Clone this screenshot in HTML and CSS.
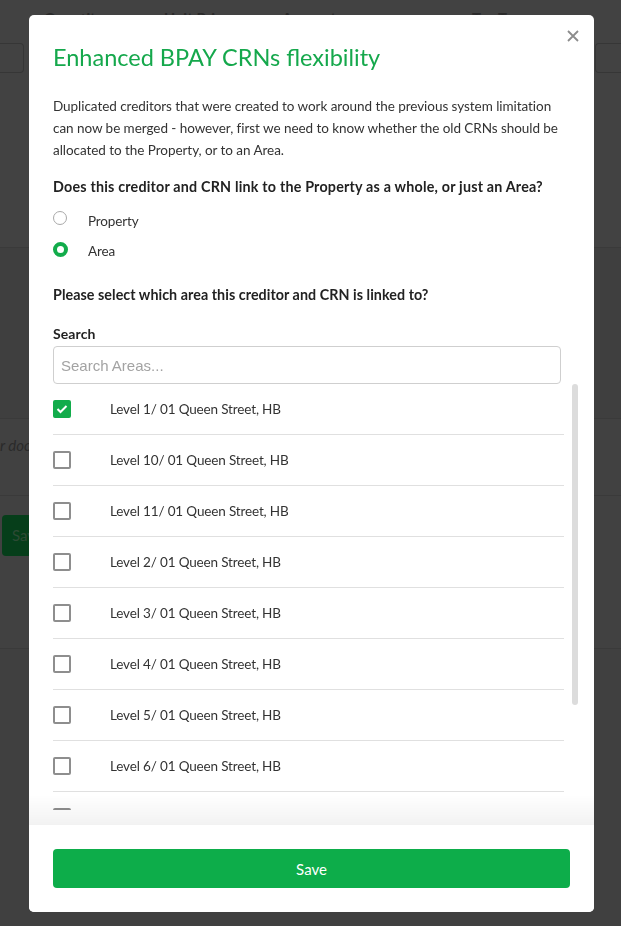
FILE: index.html
```html
<!DOCTYPE html>
<html lang="en">
<head>
<meta charset="utf-8">
<title>Enhanced BPAY CRNs flexibility</title>
<link rel="stylesheet" href="styles.css">
</head>
<body>
<div class="page">
  <div class="page-head">
    <span class="ph-q">Quantity</span>
    <span class="ph-u">Unit Price</span>
    <span class="ph-a">Amount</span>
    <span class="ph-t">Tax Type</span>
  </div>
  <div class="page-row">
    <div class="page-ta"></div>
    <div class="page-box"></div>
  </div>
  <div class="page-band b2"></div>
  <div class="page-band b3">
    <div class="note-row"><span class="note-pre"><span>Drag and drop you</span></span><span>r documents</span></div>
  </div>
  <div class="page-band b4"><span class="page-save">Save</span></div>
  <div class="page-band b5"></div>
</div>

<div class="modal" role="dialog">
  <button class="close" aria-label="Close">
    <svg width="12" height="12" viewBox="0 0 12 12"><path d="M1 1 L11 11 M11 1 L1 11" stroke="#8c8c8c" stroke-width="1.8" fill="none"/></svg>
  </button>
  <div class="modal-head">
    <h2 class="title">Enhanced BPAY CRNs flexibility</h2>
  </div>
  <div class="modal-content">
    <p class="intro">Duplicated creditors that were created to work around the previous system limitation can now be merged - however, first we need to know whether the old CRNs should be allocated to the Property, or to an Area.</p>
    <p class="question">Does this creditor and CRN link to the Property as a whole, or just an Area?</p>
    <div class="radios">
      <label class="radio-row"><span class="radio"></span><span class="radio-label">Property</span></label>
      <label class="radio-row"><span class="radio checked"></span><span class="radio-label">Area</span></label>
    </div>
    <p class="question q2">Please select which area this creditor and CRN is linked to?</p>
    <div class="search-label">Search</div>
    <input class="search" type="text" placeholder="Search Areas...">
  </div>
  <div class="list-wrap">
    <ul class="list">
      <li class="item"><span class="cb checked"><svg width="12" height="10" viewBox="0 0 12 10"><path d="M1.5 5 L4.5 8 L10.5 2" stroke="#fff" stroke-width="2" fill="none"/></svg></span><span class="item-label">Level 1/ 01 Queen Street, HB</span></li>
      <li class="item"><span class="cb"></span><span class="item-label">Level 10/ 01 Queen Street, HB</span></li>
      <li class="item"><span class="cb"></span><span class="item-label">Level 11/ 01 Queen Street, HB</span></li>
      <li class="item"><span class="cb"></span><span class="item-label">Level 2/ 01 Queen Street, HB</span></li>
      <li class="item"><span class="cb"></span><span class="item-label">Level 3/ 01 Queen Street, HB</span></li>
      <li class="item"><span class="cb"></span><span class="item-label">Level 4/ 01 Queen Street, HB</span></li>
      <li class="item"><span class="cb"></span><span class="item-label">Level 5/ 01 Queen Street, HB</span></li>
      <li class="item"><span class="cb"></span><span class="item-label">Level 6/ 01 Queen Street, HB</span></li>
      <li class="item"><span class="cb"></span><span class="item-label">Level 7/ 01 Queen Street, HB</span></li>
      <li class="item"><span class="cb"></span><span class="item-label">Level 8/ 01 Queen Street, HB</span></li>
      <li class="item"><span class="cb"></span><span class="item-label">Level 9/ 01 Queen Street, HB</span></li>
    </ul>
    <div class="scrollbar"><div class="thumb"></div></div>
  </div>
  <div class="modal-foot">
    <button class="save">Save</button>
  </div>
</div>
</body>
</html>
```

FILE: styles.css
```css
* { box-sizing: border-box; }
html, body { margin: 0; padding: 0; }
body {
  width: 621px;
  height: 926px;
  overflow: hidden;
  background: #3f3f3f;
  font-family: Lato, "Open Sans", sans-serif;
  color: #2b2b2b;
}

/* dimmed page behind the dialog */
.page { height: 926px; display: flex; flex-direction: column; }
.page-head {
  height: 43px;
  background: #424242;
  font-weight: 700;
  font-size: 15px;
  color: #2a2a2a;
  display: flex;
  padding: 9px 0 0 44px;
}
.ph-q { width: 120px; }
.ph-u { width: 118px; }
.ph-a { width: 190px; }
.ph-t { width: 100px; }
.page-row {
  height: 205px;
  background: #424242;
  display: flex;
  justify-content: space-between;
  border-bottom: 1px solid #3a3a3a;
}
.page-ta {
  width: 24px; height: 30px;
  border: 1px solid #363636; border-left: none;
  border-radius: 0 4px 4px 0;
}
.page-box {
  width: 26px; height: 30px;
  border: 1px solid #363636; border-right: none;
  border-radius: 4px 0 0 4px;
}
.page-band { background: #404040; }
.b2 { height: 171px; background: #3f3f3f; border-bottom: 1px solid #3a3a3a; }
.b3 { height: 77px; background: #414141; border-bottom: 1px solid #3a3a3a; padding-top: 17px; }
.note-row {
  display: flex;
  white-space: nowrap;
  font-style: italic;
  font-size: 15px;
  color: #2a2a2a;
}
.note-pre { width: 0; display: flex; justify-content: flex-end; }
.b4 { height: 153px; background: #414141; border-bottom: 1px solid #3a3a3a; padding-top: 19px; }
.page-save {
  display: inline-block;
  margin-left: 2px;
  width: 60px; height: 41px;
  border-radius: 4px;
  background: #063e1a;
  color: #2d4a34;
  font-size: 15px;
  line-height: 41px;
  padding-left: 10px;
}
.b5 { flex: 1; background: #404040; }

/* dialog */
.modal {
  position: fixed;
  left: 29px;
  top: 15px;
  width: 565px;
  height: 897px;
  background: #fff;
  border-radius: 5px;
  display: flex;
  flex-direction: column;
  overflow: hidden;
}
.close {
  position: absolute;
  left: 538px;
  top: 15px;
  width: 12px; height: 12px;
  padding: 0; border: 0; background: none;
  display: block;
}
.close svg { display: block; }
.modal-head { padding: 27px 24px 0; }
.title {
  margin: 0;
  font-size: 23.5px;
  line-height: 30px;
  font-weight: 400;
  color: #15a84c;
}
.modal-content { padding: 0 24px; font-size: 13.5px; letter-spacing: -0.15px; }
.intro {
  margin: 23px 0 0;
  line-height: 22px;
  letter-spacing: -0.05px;
  color: #333;
}
.question {
  margin: 15px 0 0;
  line-height: 22px;
  font-weight: 700;
  font-size: 14.3px;
  letter-spacing: 0.2px;
  color: #222;
}
.q2 { margin-top: 18px; letter-spacing: 0.05px; }
.radios { margin-top: 8px; display: flex; flex-direction: column; }
.radio-row { height: 30px; display: flex; align-items: flex-start; }
.radio {
  width: 14px; height: 14px;
  margin-top: 5px;
  border-radius: 50%;
  border: 1px solid #a9a9a9;
  background: #fff;
  flex: none;
}
.radio.checked {
  width: 15px; height: 15px;
  margin-top: 6px;
  border: 4px solid #12ac4b;
}
.radio-label {
  margin-left: 21px;
  line-height: 30px;
  color: #333;
}
.radio.checked + .radio-label { margin-left: 20px; }
.search-label {
  margin-top: 18px;
  line-height: 20px;
  font-weight: 700;
  font-size: 14px;
  letter-spacing: 0.1px;
  color: #222;
}
.search {
  display: block;
  margin-top: 2px;
  width: 508px;
  height: 38px;
  border: 1px solid #cfcfcf;
  border-radius: 4px;
  padding: 0 7px;
  font-family: "Liberation Sans", Arial, sans-serif;
  font-size: 15px;
  letter-spacing: 0;
  color: #333;
  outline: none;
}
.search::placeholder { color: #a3a3a3; }

.list-wrap {
  flex: 1;
  min-height: 0;
  margin: 0 14px 15px 24px;
  display: flex;
}
.list {
  flex: 1;
  list-style: none;
  margin: 0;
  padding: 0;
  overflow: hidden;
}
.item {
  height: 51px;
  margin-right: 8px;
  border-bottom: 1px solid #e0e0e0;
  display: flex;
  align-items: center;
  font-size: 13.5px;
  letter-spacing: -0.15px;
  color: #333;
}
.cb {
  width: 18px; height: 18px;
  border: 2px solid #8e8e8e;
  border-radius: 2px;
  flex: none;
  display: flex;
  align-items: center;
  justify-content: center;
}
.cb.checked { background: #12ac4b; border-color: #12ac4b; }
.cb svg { display: block; }
.item-label { margin-left: 39px; }
.scrollbar { width: 8px; flex: none; }
.thumb {
  width: 6px;
  height: 321px;
  border-radius: 3px;
  background: #dcdcdc;
}

.modal-foot {
  position: relative;
  padding: 24px;
  background: #fff;
}
.modal-foot::before {
  content: "";
  position: absolute;
  left: 0; right: 0;
  top: -30px;
  height: 30px;
  background: linear-gradient(rgba(0,0,0,0), rgba(0,0,0,0.05));
}
.save {
  display: block;
  width: 517px;
  height: 39px;
  border: 0;
  border-radius: 4px;
  background: #0dad4a;
  color: #fff;
  font-family: Lato, "Open Sans", sans-serif;
  font-size: 15px;
}
```
